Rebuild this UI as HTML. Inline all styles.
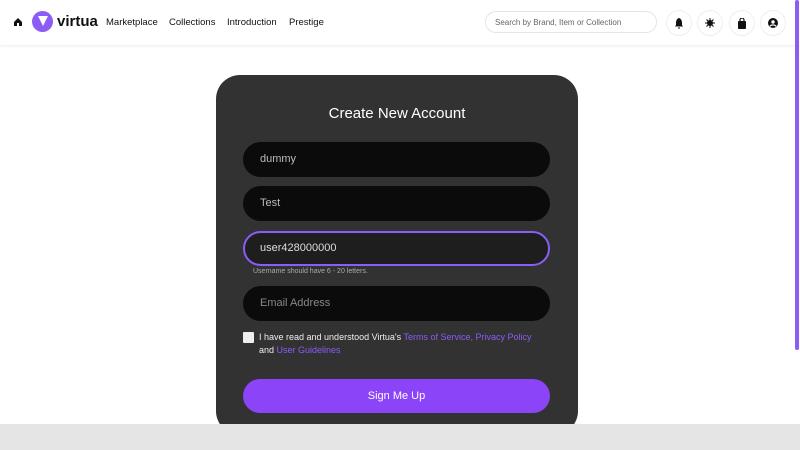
<!DOCTYPE html><html><head><style>
body{margin:0;width:800px;height:450px;overflow:hidden;background:#fff;font-family:"Liberation Sans",sans-serif;position:relative}
.a{position:absolute}
.nav{top:0;left:0;width:800px;height:45px;background:#fff;box-shadow:0 1px 3px rgba(0,0,0,.08)}
.ic{width:24px;height:24px;border-radius:50%;border:1px solid #eee;top:10px;display:flex;align-items:center;justify-content:center}
.lk{top:17px;font-size:9.5px;color:#111}
.card{left:216px;top:75px;width:362px;height:360px;background:#323232;border-radius:24px}
.in{left:243px;width:307px;height:35px;border-radius:18px;background:#0b0b0b;color:#bbb;font-size:11px;line-height:35px;padding-left:17px;box-sizing:border-box}
.p{color:#8b5cf6}
</style></head><body>
<div class="a nav"></div>
<div class="a ic" style="left:6px;border:none"><svg width="8" height="8" viewBox="0 0 8 8"><path d="M0 4L4 0L8 4V8H5V5H3V8H0Z" fill="#111"/></svg></div>
<div class="a" style="left:32px;top:11px;width:21px;height:21px;border-radius:50%;background:#8b5cf6"></div>
<div class="a" style="left:38px;top:16px;width:0;height:0;border-left:5px solid transparent;border-right:5px solid transparent;border-top:10px solid #fff"></div>
<div class="a" style="left:57px;top:13px;font-size:15px;font-weight:bold;color:#111">virtua</div>
<div class="a lk" style="left:106px">Marketplace</div>
<div class="a lk" style="left:169px">Collections</div>
<div class="a lk" style="left:227px">Introduction</div>
<div class="a lk" style="left:289px">Prestige</div>
<div class="a" style="left:485px;top:11px;width:172px;height:22px;border:1px solid #e5e5e5;border-radius:12px;font-size:8px;color:#666;line-height:22px;padding-left:9px;box-sizing:border-box">Search by Brand, Item or Collection</div>
<div class="a ic" style="left:666px"><svg width="10" height="11" viewBox="0 0 10 11"><path d="M5 0C2.5 1 2 3 2 5V7L1 8.5H9L8 7V5C8 3 7.5 1 5 0ZM4 9.5H6V10.5H4Z" fill="#111"/></svg></div>
<div class="a ic" style="left:697px"><svg width="10" height="10" viewBox="0 0 10 10"><circle cx="5" cy="5" r="3" fill="#111"/><path d="M5 0V10M0 5H10M1.5 1.5L8.5 8.5M8.5 1.5L1.5 8.5" stroke="#111" stroke-width="1"/></svg></div>
<div class="a ic" style="left:729px"><svg width="10" height="11" viewBox="0 0 10 11"><path d="M3 3V2A2 2 0 0 1 7 2V3" stroke="#111" fill="none" stroke-width="1.2"/><rect x="1" y="3" width="8" height="8" rx="1" fill="#111"/></svg></div>
<div class="a ic" style="left:760px"><svg width="10" height="10" viewBox="0 0 10 10"><circle cx="5" cy="5" r="5" fill="#111"/><circle cx="5" cy="4" r="1.7" fill="#fff"/><path d="M2 8.3C3 6.5 7 6.5 8 8.3" stroke="#fff" stroke-width="1.2" fill="none"/></svg></div>
<div class="a" style="left:795px;top:0;width:4px;height:350px;background:#8b5cf6;border-radius:2px"></div>
<div class="a card"></div>
<div class="a" style="left:216px;top:105px;width:362px;text-align:center;color:#fff;font-size:15px">Create New Account</div>
<div class="a in" style="top:142px">dummy</div>
<div class="a in" style="top:186px">Test</div>
<div class="a in" style="top:231px;background:#1e1e1e;border:2px solid #8b5cf6;line-height:31px;padding-left:15px;color:#ddd">user428000000</div>
<div class="a" style="left:253px;top:268px;font-size:7px;color:#aaa">Username should have 6 - 20 letters.</div>
<div class="a in" style="top:286px;color:#888">Email Address</div>
<div class="a" style="left:243px;top:332px;width:11px;height:11px;background:#eee;border-radius:1px"></div>
<div class="a" style="left:259px;top:331px;font-size:9px;color:#eee;line-height:13px">I have read and understood Virtua's <span class="p">Terms of Service, Privacy Policy</span><br>and <span class="p">User Guidelines</span></div>
<div class="a" style="left:243px;top:379px;width:307px;height:34px;border-radius:17px;background:#8b44f7;color:#fff;font-size:11px;text-align:center;line-height:34px">Sign Me Up</div>
<div class="a" style="left:0;top:424px;width:800px;height:26px;background:#e5e5e5"></div>
</body></html>
